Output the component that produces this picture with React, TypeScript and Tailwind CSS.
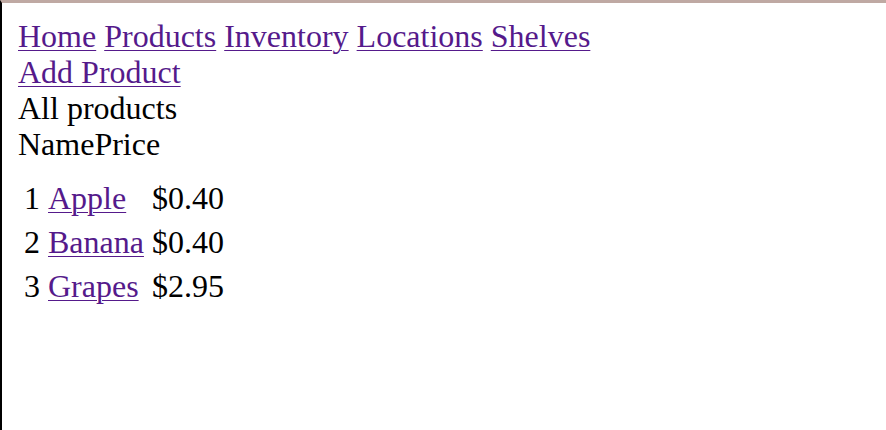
const links = ["Home", "Products", "Inventory", "Locations", "Shelves"];

const products = [
  { id: 1, name: "Apple", price: "$0.40" },
  { id: 2, name: "Banana", price: "$0.40" },
  { id: 3, name: "Grapes", price: "$2.95" },
];

export default function App() {
  return (
    <div
      className="h-[430px] border-t-[3px] border-l-2 border-t-[#bfa9a3] border-l-black bg-white px-[16px] pt-[15px] text-[32px] leading-[36px] text-black"
      style={{ fontFamily: '"Liberation Serif", "Times New Roman", serif' }}
    >
      {/* nav */}
      <div>
        {links.map((l, i) => (
          <span key={l}>
            <a href="#" className="text-[#551a8b] underline decoration-1 underline-offset-[3px]">
              {l}
            </a>
            {i < links.length - 1 ? " " : ""}
          </span>
        ))}
      </div>
      <div>
        <a href="#" className="text-[#551a8b] underline decoration-1 underline-offset-[3px]">
          Add Product
        </a>
      </div>
      <div>All products</div>
      <div>
        <span>Name</span>
        <span>Price</span>
      </div>

      {/* product table */}
      <table className="mt-[12px] border-separate border-spacing-[4px] -ml-[4px]">
        <tbody>
          {products.map((p) => (
            <tr key={p.id}>
              <td className="p-[2px] pl-[6px]">{p.id}</td>
              <td className="p-[2px]">
                <a href="#" className="text-[#551a8b] underline decoration-1 underline-offset-[3px]">
                  {p.name}
                </a>
              </td>
              <td className="p-[2px]">{p.price}</td>
            </tr>
          ))}
        </tbody>
      </table>
    </div>
  );
}
